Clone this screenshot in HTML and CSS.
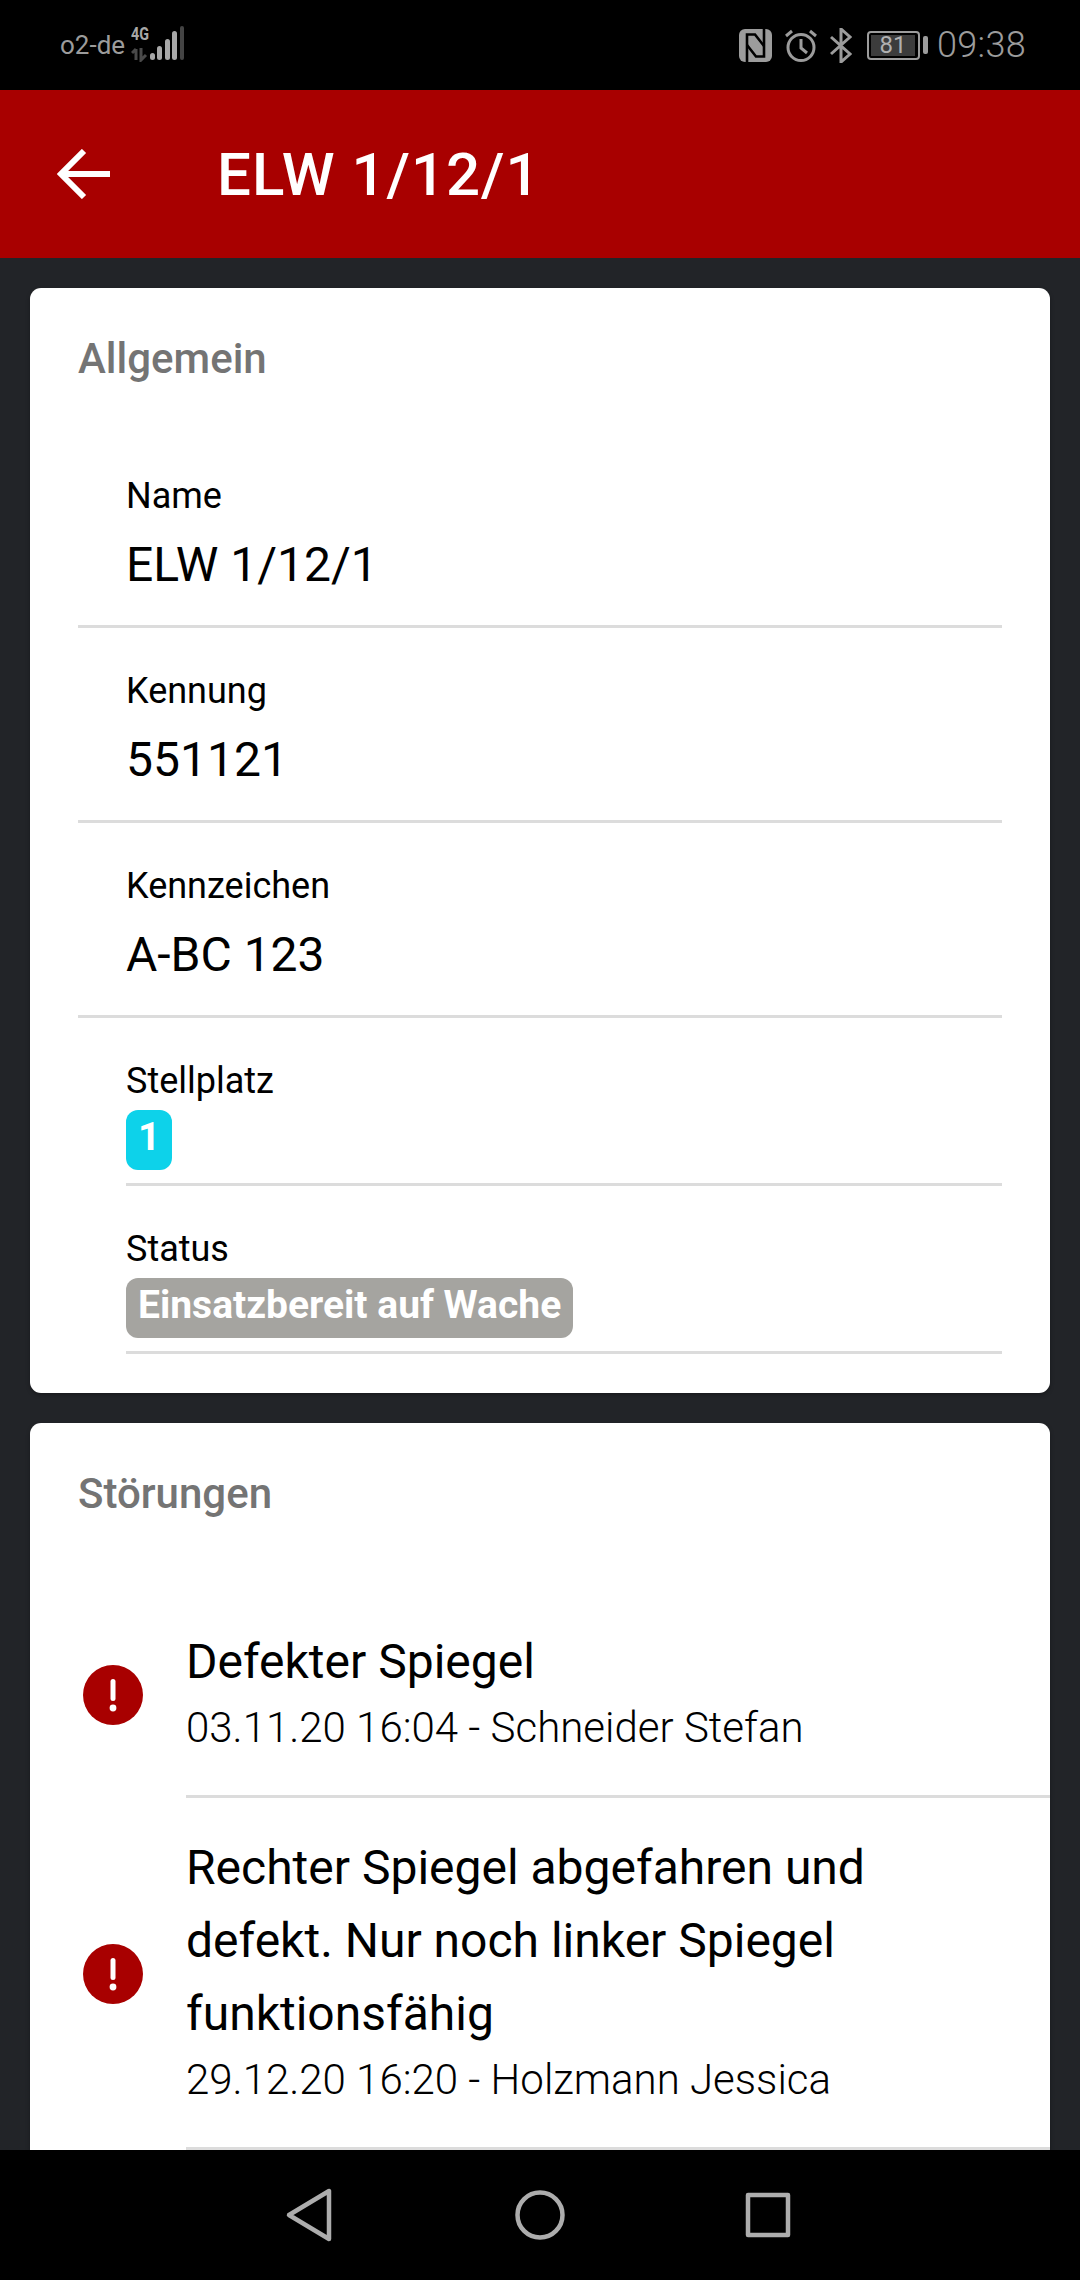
FILE: index.html
```html
<!DOCTYPE html>
<html lang="de">
<head>
    <meta charset="UTF-8">
    <meta name="viewport" content="width=device-width, initial-scale=1.0">
    <title>ELW 1/12/1</title>
    <link rel="stylesheet" href="styles.css">
</head>
<body>
    <div class="statusbar">
        <div class="status-left">
            <span class="carrier">o2-de</span>
            <svg class="signal" width="54" height="42" viewBox="0 -6 54 42">
                <text x="0" y="14" class="net-type" textLength="18" lengthAdjust="spacingAndGlyphs">4G</text>
                <path d="M5 34V23M1 27l4-4M10 22v12l5-5" fill="none" stroke="#4a4a4a" stroke-width="3"/>
                <rect x="19" y="27" width="5" height="7" rx="2.5" fill="#a8a8a8"/>
                <rect x="26" y="20" width="5" height="14" rx="2.5" fill="#a8a8a8"/>
                <rect x="34" y="13" width="5" height="21" rx="2.5" fill="#a8a8a8"/>
                <rect x="41" y="5" width="5" height="29" rx="2.5" fill="#a8a8a8"/>
                <rect x="49" y="0" width="4" height="34" rx="2" fill="#444"/>
            </svg>
        </div>
        <div class="status-right">
            <svg width="33" height="33" viewBox="0 0 33 33">
                <rect width="33" height="33" rx="6" fill="#9c9c9c"/>
                <path d="M8 33V5.500h8L25 17" fill="none" stroke="#000" stroke-width="2.600"/>
                <path d="M25 0v27.500h-8L8 16" fill="none" stroke="#000" stroke-width="2.600"/>
            </svg>
            <svg width="34" height="33" viewBox="0 0 34 33" fill="none" stroke="#9c9c9c" stroke-width="3">
                <circle cx="17" cy="18.500" r="13"/>
                <path d="M17 10v9l6 5"/>
                <path d="M2 7l6-5M32 7l-6-5"/>
            </svg>
            <svg width="22" height="35" viewBox="0 0 22 35" fill="none" stroke="#9c9c9c" stroke-width="3">
                <path d="M1 9l19 17-9 8V1l9 8L1 26"/>
            </svg>
            <div class="battery">
                <div class="battery-body"><span class="battery-level">81</span></div>
                <div class="battery-tip"></div>
            </div>
            <span class="clock">09:38</span>
        </div>
    </div>

    <header class="toolbar">
        <svg class="back" width="54" height="50" viewBox="0 0 54 50" fill="none" stroke="#fff" stroke-width="6">
            <path d="M53 25H4"/>
            <path d="M27 2L4 25l23 23"/>
        </svg>
        <h1>ELW 1/12/1</h1>
    </header>

    <main class="content">
        <section class="card">
            <h2 class="card-title">Allgemein</h2>
            <div class="field">
                <div class="field-label">Name</div>
                <div class="field-value">ELW 1/12/1</div>
            </div>
            <div class="field">
                <div class="field-label">Kennung</div>
                <div class="field-value">551121</div>
            </div>
            <div class="field">
                <div class="field-label">Kennzeichen</div>
                <div class="field-value">A-BC 123</div>
            </div>
            <div class="field field-badge">
                <div class="field-label">Stellplatz</div>
                <span class="badge badge-cyan">1</span>
            </div>
            <div class="field field-badge">
                <div class="field-label">Status</div>
                <span class="badge badge-grey">Einsatzbereit auf Wache</span>
            </div>
        </section>

        <section class="card card-faults">
            <h2 class="card-title">Störungen</h2>
            <div class="fault">
                <svg class="fault-icon" width="60" height="60" viewBox="0 0 60 60">
                    <circle cx="30" cy="30" r="30" fill="#a80000"/>
                    <rect x="27.500" y="14" width="5" height="22" rx="2.500" fill="#fff"/>
                    <circle cx="30" cy="43" r="3.400" fill="#fff"/>
                </svg>
                <div class="fault-text">
                    <div class="fault-title">Defekter Spiegel</div>
                    <div class="fault-meta">03.11.20 16:04 - Schneider Stefan</div>
                </div>
            </div>
            <div class="fault">
                <svg class="fault-icon" width="60" height="60" viewBox="0 0 60 60">
                    <circle cx="30" cy="30" r="30" fill="#a80000"/>
                    <rect x="27.500" y="14" width="5" height="22" rx="2.500" fill="#fff"/>
                    <circle cx="30" cy="43" r="3.400" fill="#fff"/>
                </svg>
                <div class="fault-text">
                    <div class="fault-title">Rechter Spiegel abgefahren und defekt. Nur noch linker Spiegel funktionsfähig</div>
                    <div class="fault-meta">29.12.20 16:20 - Holzmann Jessica</div>
                </div>
            </div>
        </section>
    </main>

    <nav class="navbar">
        <svg width="60" height="60" viewBox="0 0 60 60" fill="none" stroke="#adadad" stroke-width="4.500" stroke-linejoin="round">
            <path d="M10 30L50 6v48z"/>
        </svg>
        <svg width="60" height="60" viewBox="0 0 60 60" fill="none" stroke="#adadad" stroke-width="4.500">
            <circle cx="31" cy="30" r="22.500"/>
        </svg>
        <svg width="60" height="60" viewBox="0 0 60 60" fill="none" stroke="#adadad" stroke-width="4.500" stroke-linejoin="round">
            <rect x="10" y="10" width="40" height="40"/>
        </svg>
    </nav>
</body>
</html>
```

FILE: styles.css
```css
* {
    box-sizing: border-box;
}
body {
    margin: 0;
    width: 1080px;
    height: 2280px;
    display: flex;
    flex-direction: column;
    overflow: hidden;
    font-family: Roboto, 'Noto Sans', sans-serif;
    background-color: #222428;
    color: #000000;
}

/* status bar */
.statusbar {
    height: 90px;
    flex: none;
    background-color: #000000;
    color: #9c9c9c;
    display: flex;
    align-items: center;
    justify-content: space-between;
    padding: 0 54px 0 60px;
}
.status-left {
    display: flex;
    align-items: center;
    gap: 6px;
}
.carrier {
    font-size: 26px;
}
.signal {
    margin-top: -8px;
}
.net-type {
    font-size: 18px;
    font-weight: 700;
    fill: #a8a8a8;
}
.status-right {
    display: flex;
    align-items: center;
    gap: 12px;
}
.battery {
    display: flex;
    align-items: center;
    gap: 3px;
    margin-left: 3px;
}
.battery-body {
    width: 53px;
    height: 29px;
    border: 2px solid #9c9c9c;
    border-radius: 4px;
    padding: 2px;
    display: flex;
}
.battery-level {
    width: 44px;
    background-color: #3c3c3c;
    color: #b0b0b0;
    font-size: 24px;
    line-height: 21px;
    text-align: center;
}
.battery-tip {
    width: 5px;
    height: 18px;
    border-radius: 2px;
    background-color: #9c9c9c;
}
.clock {
    font-size: 36px;
    font-weight: 300;
    letter-spacing: 0.3px;
    margin-left: -3px;
}

/* toolbar */
.toolbar {
    height: 168px;
    flex: none;
    background-color: #a80000;
    color: #ffffff;
    display: flex;
    align-items: center;
    padding-left: 57px;
    gap: 106px;
}
.toolbar h1 {
    margin: 0;
    font-size: 60px;
    font-weight: 500;
    letter-spacing: 1px;
}

/* content */
.content {
    flex: 1;
    min-height: 0;
    overflow: hidden;
    padding: 30px 30px 0;
}
.card {
    background-color: #ffffff;
    border-radius: 11px;
    padding: 0 48px 39px;
    box-shadow: 0 2px 4px rgba(0, 0, 0, 0.3);
}
.card-faults {
    margin-top: 30px;
    padding-right: 0;
}
.card-title {
    margin: 0;
    height: 145px;
    padding-top: 46px;
    font-size: 42px;
    line-height: 50px;
    font-weight: 500;
    color: #747474;
}
.field {
    padding: 41px 0 30px 48px;
    border-bottom: 3px solid #dcdcdc;
}
.field-label {
    font-size: 36px;
    line-height: 44px;
}
.field-value {
    font-size: 48px;
    line-height: 60px;
    margin-top: 17px;
}
.field-badge {
    margin-left: 48px;
    padding: 41px 0 13px;
}
.badge {
    display: inline-block;
    margin-top: 7px;
    height: 60px;
    border-radius: 12px;
    padding: 0 12px;
    color: #ffffff;
    font-size: 39px;
    font-weight: 700;
    line-height: 54px;
    vertical-align: top;
}
.badge-cyan {
    background-color: #0dd2ea;
}
.badge-grey {
    background-color: #a5a4a0;
}

/* faults */
.card-faults .card-title {
    height: 169px;
}
.fault {
    display: flex;
    align-items: center;
}
.fault-icon {
    flex: none;
    margin-left: 5px;
}
.fault-text {
    flex: 1;
    margin-left: 43px;
    padding: 33px 48px 38px 0;
    border-bottom: 3px solid #dcdcdc;
}
.fault-title {
    font-size: 48px;
    line-height: 73px;
}
.fault-meta {
    font-size: 42px;
    line-height: 58px;
    font-weight: 300;
    margin-top: 1px;
}

/* nav bar */
.navbar {
    height: 130px;
    flex: none;
    background-color: #000000;
    display: flex;
    align-items: center;
    justify-content: space-between;
    padding: 0 282px 0 279px;
}
```
